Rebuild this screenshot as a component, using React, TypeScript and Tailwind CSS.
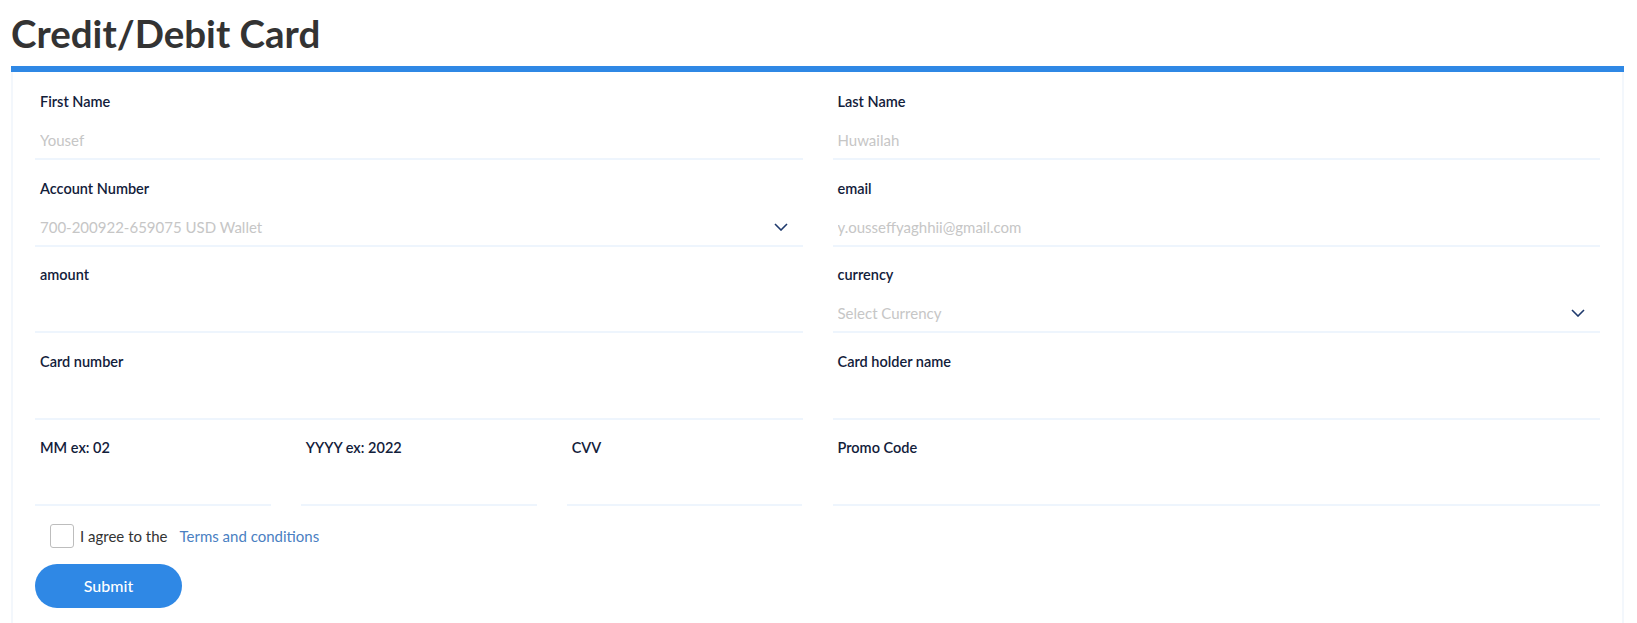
import React from "react";

const Chevron = () => (
  <svg width="14" height="8" viewBox="0 0 14 8" fill="none" className="shrink-0">
    <polyline points="1,1 7,7 13,1" stroke="#1f3a6d" strokeWidth="1.6" fill="none" />
  </svg>
);

type FieldProps = { label: string; placeholder?: string; select?: boolean };

const Field = ({ label, placeholder, select }: FieldProps) => (
  <div className="flex flex-col">
    <label className="pl-[5px] text-[14.5px] leading-[20px] font-semibold text-[#12203a]">{label}</label>
    <div className="mt-[10px] flex h-[38px] items-center border-b-2 border-[#eef5fd] pl-[5px] pr-[15px]">
      <input
        className="h-full min-w-0 flex-1 bg-transparent text-[15px] text-[#333] outline-none placeholder:text-[#c6c6c6]"
        placeholder={placeholder}
        readOnly={select}
      />
      {select && <Chevron />}
    </div>
  </div>
);

export default function App() {
  return (
    <div className="min-h-[623px] bg-white font-['Lato','Open_Sans',sans-serif]">
      <div className="ml-[11px] w-[1613px]">
        <h1 className="pt-[11px] text-[38.5px] leading-[45px] font-bold text-[#333333]">Credit/Debit Card</h1>
        <div className="mt-[10px] h-[6px] bg-[#2f88e5]" />
        <div className="border-x-2 border-[#f3f7fc] px-[22px] pt-[20px] pb-[20px]">
          <div className="grid grid-cols-2 gap-x-[30px] gap-y-[18.5px]">
            <Field label="First Name" placeholder="Yousef" />
            <Field label="Last Name" placeholder="Huwailah" />
            <Field label="Account Number" placeholder="700-200922-659075 USD Wallet" select />
            <Field label="email" placeholder="y.ousseffyaghhii@gmail.com" />
            <Field label="amount" />
            <Field label="currency" placeholder="Select Currency" select />
            <Field label="Card number" />
            <Field label="Card holder name" />
            <div className="grid grid-cols-3 gap-x-[30px]">
              <Field label="MM ex: 02" />
              <Field label="YYYY ex: 2022" />
              <Field label="CVV" />
            </div>
            <Field label="Promo Code" />
          </div>
          <div className="mt-[18px] flex items-center pl-[15px]">
            <span className="h-[24px] w-[24px] rounded-[3px] border border-[#bdbdbd] bg-white" />
            <span className="ml-[6px] text-[15px] leading-[24px] text-[#333]">I agree to the</span>
            <a className="ml-[12px] text-[15px] leading-[24px] text-[#4a80c2]">Terms and conditions</a>
          </div>
          <button className="mt-[16px] h-[44px] w-[147px] rounded-full bg-[#2f88e5] text-[16px] font-medium text-white">
            Submit
          </button>
        </div>
      </div>
    </div>
  );
}
